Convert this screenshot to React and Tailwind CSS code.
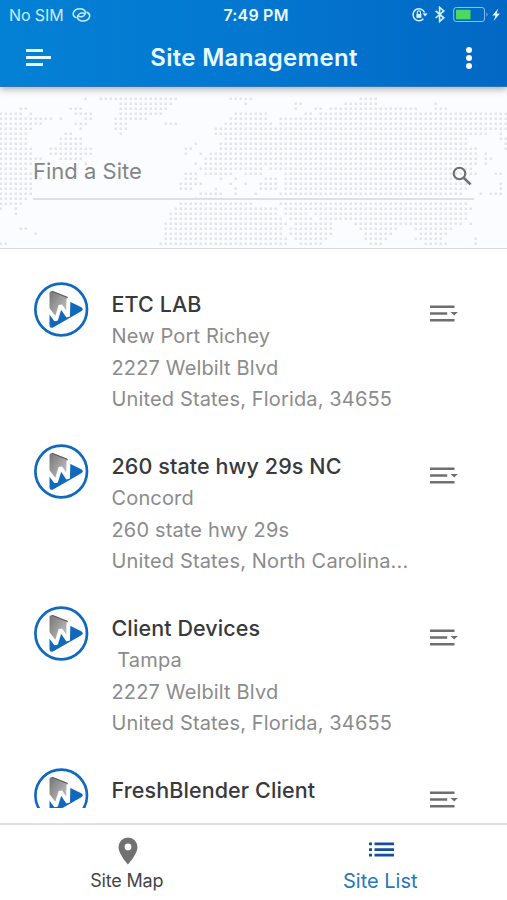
import React from "react";

// Land cells of the dotted map: inclusive column ranges for each row.
const LAND = [
  "17-17 20-35 46-50 72-75",
  "24-34 49-49 59-60 69-75 87-87",
  "4-5 14-16 24-33 59-59 63-64 66-83 87-89",
  "0-4 6-6 15-18 24-32 47-53 61-62 64-101",
  "0-10 12-12 17-18 23-29 46-53 56-101",
  "0-8 15-17 23-25 33-35 45-54 56-101",
  "0-6 16-16 23-25 43-101",
  "0-5 13-14 24-24 43-97 100-100",
  "0-5 12-16 45-93 100-101",
  "0-5 12-16 39-39 44-93 101-101",
  "0-6 10-18 37-38 44-95 101-101",
  "0-6 10-18 37-37 40-40 42-95 97-97",
  "0-8 12-16 41-95 97-98",
  "0-6 17-17 39-39 41-95 97-97",
  "0-5 40-52 54-94",
  "0-7 37-39 41-46 49-52 57-95 99-100",
  "0-8 37-39 44-44 47-47 53-55 57-93",
  "0-6 36-40 46-46 49-49 52-55 57-94 100-100",
  "0-6 36-38 43-43 47-47 52-55 57-93 100-100",
  "0-6 40-44 47-47 51-51 56-92 96-96 98-100",
  "0-5 39-44",
  "0-4 36-50 56-93",
  "0-0 3-3 35-55 57-94",
  "3-3 34-55 57-61 63-93",
  "34-56 58-62 64-93",
  "33-57 59-66 71-92 94-94",
  "4-5 33-56 58-66 72-79 83-90",
  "7-7 33-56 58-66 73-78 84-89",
  "33-57 59-65 73-77 83-88 95-95",
  "0-1 32-57 60-64 74-76 85-89 95-95",
];

const dots = LAND.flatMap((row, r) =>
  row.split(" ").flatMap((range) => {
    const [from, to] = range.split("-").map(Number);
    return Array.from({ length: to - from + 1 }, (_, i) => `M${((from + i) * 5 - 0.5).toFixed(1)} ${(r * 5 + 10.5).toFixed(1)}h2.5v2.5h-2.5z`);
  })
).join("");

const SITES = [
  { name: "ETC LAB", lines: ["New Port Richey", "2227 Welbilt Blvd", "United States, Florida, 34655"] },
  { name: "260 state hwy 29s NC", lines: ["Concord", "260 state hwy 29s", "United States, North Carolina..."] },
  { name: "Client Devices", lines: [" Tampa", "2227 Welbilt Blvd", "United States, Florida, 34655"] },
  { name: "FreshBlender Client", lines: [] },
];

function Logo() {
  return (
    <svg viewBox="0 0 56 56" className="mt-[10.5px] h-14 w-14 shrink-0">
      <defs>
        <linearGradient id="steel" x1="0" y1="0" x2="1" y2="1">
          <stop offset="0" stopColor="#747474" />
          <stop offset="1" stopColor="#d0d0d0" />
        </linearGradient>
      </defs>
      <circle cx="28.2" cy="27.5" r="25.8" fill="#fff" stroke="#1169bd" strokeWidth="2.7" />
      <path d="M16.5 29 24 39 26.5 24 35.500 34 35.500 19 48.3 25.2q3 2 0 4L20.5 45.2q-3.8 1.8-4-2z" fill="#1169bd" />
      <path d="M16.5 11.300q0-2.200 2.800-2.400L34.800 15v18L26.500 24 24 38 16.500 28z" fill="url(#steel)" />
      <path d="M19 9.2 34.6 15.4" stroke="#5c5c5c" strokeWidth="1.1" />
      <path d="M15 27.5 23 38 27.500 23.500 35 34.500 35.500 16.500" fill="none" stroke="#fff" strokeWidth="3.9" strokeLinejoin="bevel" />
    </svg>
  );
}

function StatusIcons() {
  return (
    <svg width="92" height="18" viewBox="0 0 92 18" fill="none" stroke="#d9f2ff">
      <path d="M14.6 6.6A6 6 0 1 0 13.4 12.8" strokeWidth="1.5" />
      <path d="m12.6 7.2 5.2.2-2.8 3.2z" fill="#d9f2ff" stroke="none" />
      <path d="M6.4 7.9h5v4h-5z" fill="#d9f2ff" stroke="none" />
      <path d="M7.3 8V6.5a1.6 1.6 0 0 1 3.2 0V8" strokeWidth="1.1" />
      <path d="m25.6 4.8 8.2 7-4.2 3.6V1.4L33.8 5l-8.2 7" strokeWidth="1.6" />
      <rect x="43.7" y="1.5" width="30.8" height="14" rx="2.5" strokeWidth="1" stroke="#83c4f4" />
      <rect x="46" y="3.8" width="14.5" height="9.5" fill="#4cda5e" stroke="none" />
      <path d="M76.5 6.2q2 2.3 0 4.6z" fill="#83c4f4" stroke="none" />
      <path d="m88.3 2.5-6 7h3.2l-1.8 5.6 6.2-7.6h-3.3z" fill="#e7f7ff" stroke="none" />
    </svg>
  );
}

function Header() {
  return (
    <header className="relative z-10 h-[87px] shrink-0 border-b border-[#2879b9] bg-gradient-to-r from-[#0381d5] via-[#0477d0] to-[#0268c4] text-[#e8faff] shadow-[0_2px_7px_rgba(60,50,45,0.42)]">
      <div className="grid h-[29px] grid-cols-[1fr_auto_1fr] items-center">
        <div className="flex items-center gap-[8px] pl-[9px]">
          <span className="text-[16px] tracking-[-0.1px] text-[#c8ecff]">No SIM</span>
          <svg width="19" height="16" viewBox="0 0 19 16" fill="none" stroke="#c8ecff" strokeWidth="1.5" strokeLinecap="round">
            <path d="M4 10.6C2 9.8.9 8.2 1.3 6.2 1.9 3.6 4.8 1.8 8 1.8c3.2 0 5.6 1.7 5.4 4-.2 2.2-2.3 3.9-4.7 3.9-1.2 0-2-.4-2.5-1" />
            <path d="M14.9 5.2c2 .8 3.1 2.4 2.7 4.400-.6 2.600-3.500 4.400-6.700 4.400-3.200 0-5.600-1.700-5.400-4 .2-2.200 2.300-3.900 4.700-3.900 1.200 0 2 .4 2.500 1" />
          </svg>
        </div>
        <span className="ml-[5px] text-[16px] font-semibold tracking-[0.2px]">7:49 PM</span>
        <div className="flex justify-end pr-[5px]"><StatusIcons /></div>
      </div>
      <div className="grid h-[57px] grid-cols-[1fr_auto_1fr] items-center">
        <button className="flex flex-col gap-[4px] pl-[26px]" aria-label="Menu">
          <span className="h-[3px] w-[17px] bg-current" />
          <span className="h-[3px] w-[25px] bg-current" />
          <span className="h-[3px] w-[17px] bg-current" />
        </button>
        <h1 className="ml-[1px] text-[24px] font-semibold tracking-[0.3px]">Site Management</h1>
        <button className="flex flex-col items-end gap-[2px] pr-[35px]" aria-label="More">
          <span className="h-[6px] w-[6px] rounded-full bg-white" />
          <span className="h-[6px] w-[6px] rounded-full bg-white" />
          <span className="h-[6px] w-[6px] rounded-full bg-white" />
        </button>
      </div>
    </header>
  );
}

function Search() {
  return (
    <section className="relative h-[162px] shrink-0 overflow-hidden border-b border-[#d9dadc] bg-[#fbfcff] pl-[33px] pr-[33px]">
      <svg className="absolute left-0 top-0" width="507" height="161">
        <path d={dots} fill="#e4e5e8" />
      </svg>
      <div className="relative flex h-[113px] items-end justify-between border-b-2 border-[#dfe0e2] pb-[10px]">
        <span className="pb-[3px] text-[22px] leading-[28px] text-[#858587]">Find a Site</span>
        <svg width="20" height="20" viewBox="0 0 20 20" fill="none" stroke="#6f6f70" strokeWidth="2.1" className="mb-[2px] mr-[2px]">
          <circle cx="7.5" cy="7.5" r="5.8" />
          <path d="m11.8 11.8 6.6 6.6" strokeWidth="2.6" />
        </svg>
      </div>
    </section>
  );
}

function SiteRow({ name, lines }) {
  return (
    <li className="flex h-[162px] shrink-0 pl-[33px]">
      <Logo />
      <div className="ml-[22.5px] w-[310px] pt-[17px] text-[20px] leading-[31.4px] tracking-[0.15px] text-[#8b8b8c]">
        <h2 className="whitespace-nowrap pb-[1.3px] text-[21.5px] leading-[32px] font-medium tracking-[0.1px] text-[#38393c]">{name}</h2>
        {lines.map((line) => <p key={line} className="whitespace-pre">{line}</p>)}
      </div>
      <svg width="30" height="20" viewBox="0 0 30 20" className="ml-[7.5px] mt-[33px]" fill="#6f6f70">
        <path d="M1 1.5h24.5v2.5H1zM1 8.3h17.2v2.5H1zM1 15.1h24.5v2.5H1zM21.5 7.9h7.4l-3.7 3.7z" />
      </svg>
    </li>
  );
}

export default function App() {
  return (
    <div className="flex h-[900px] w-[507px] flex-col overflow-hidden bg-white font-['Inter','Liberation_Sans',sans-serif]">
      <Header />
      <Search />
      <main className="h-[559px] shrink-0 overflow-hidden pt-[22px]">
        <ul className="flex flex-col">
          {SITES.map((site) => <SiteRow key={site.name} {...site} />)}
        </ul>
      </main>
      <nav className="mt-[15px] grid h-[77px] shrink-0 grid-cols-2 border-t-2 border-[#dfdfe0] bg-white">
        <div className="flex flex-col items-center pt-[12px] text-[18px] leading-[24px] tracking-[-0.2px] text-[#454547]">
          <svg width="20" height="28" viewBox="0 0 20 28" className="ml-[3px]">
            <path fillRule="evenodd" d="M10 .5A9.5 9.5 0 0 0 .5 10C.5 17 10 27.5 10 27.5S19.5 17 19.5 10A9.5 9.5 0 0 0 10 .5m0 6a3.4 3.4 0 1 1 0 6.8 3.4 3.4 0 0 1 0-6.8" fill="#717172" />
          </svg>
          <span className="mt-[4px]">Site Map</span>
        </div>
        <div className="flex flex-col items-center pt-[17px] text-[20px] leading-[24px] text-[#2878bb]">
          <svg width="26" height="16" viewBox="0 0 26 16" fill="#164e9d" className="ml-[2px]">
            <path d="M1 .5h3v2.7H1zM6.5.5H26v2.7H6.5zM1 6.2h3v2.7H1zM6.5 6.2H26v2.7H6.5zM1 11.8h3v2.7H1zM6.5 11.8H26v2.7H6.5z" />
          </svg>
          <span className="mt-[11px]">Site List</span>
        </div>
      </nav>
    </div>
  );
}
